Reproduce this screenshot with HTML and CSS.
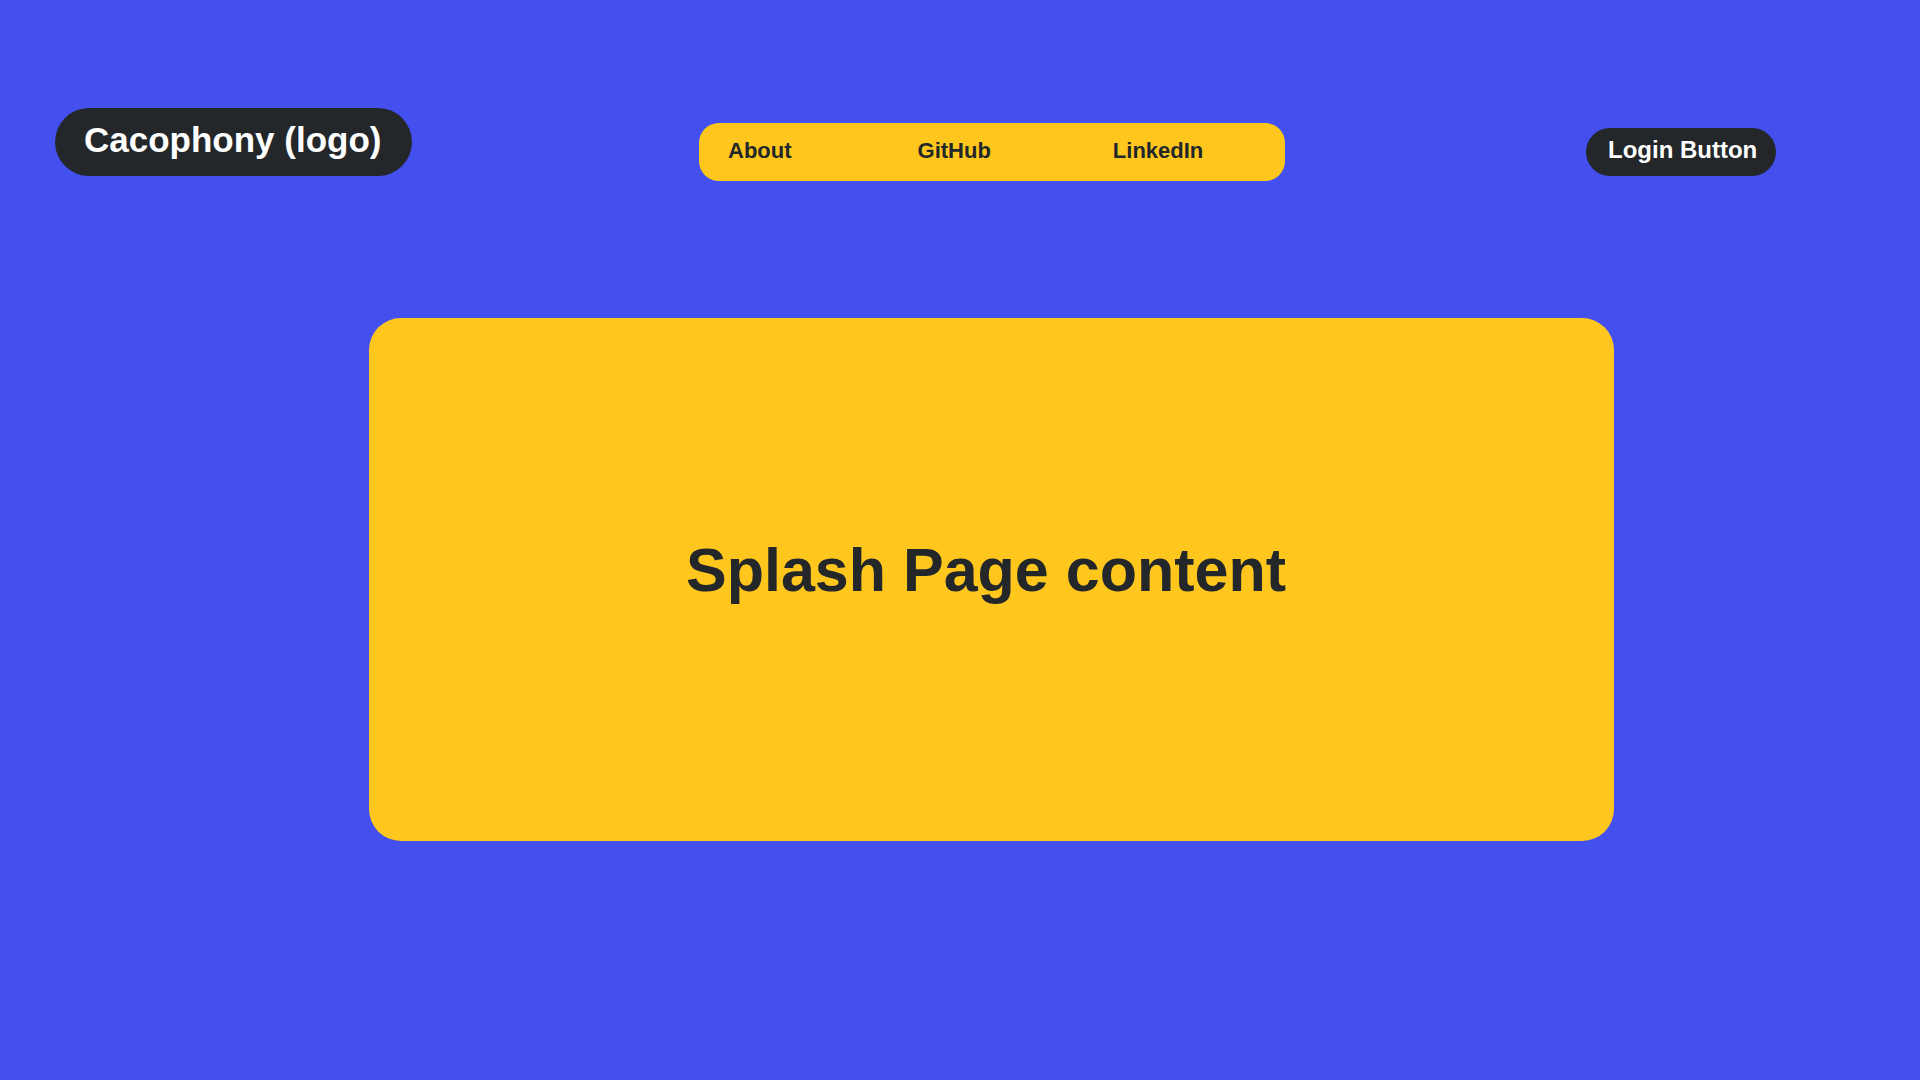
FILE: index.html
```html
<!DOCTYPE html>
<html lang="en">
<head>
<meta charset="utf-8">
<title>Cacophony</title>
<link rel="stylesheet" href="styles.css">
</head>
<body>
  <header class="header">
    <div class="logo">Cacophony (logo)</div>
    <nav class="nav">
      <a class="nav-link about" href="#">About</a>
      <a class="nav-link github" href="#">GitHub</a>
      <a class="nav-link linkedin" href="#">LinkedIn</a>
    </nav>
    <button class="login">Login Button</button>
  </header>
  <main class="main">
    <section class="splash">
      <h1 class="splash-title">Splash Page content</h1>
    </section>
  </main>
</body>
</html>
```

FILE: styles.css
```css
* { box-sizing: border-box; }

html, body {
  margin: 0;
  padding: 0;
}

body {
  background: #4350ED;
  width: 1920px;
  height: 1080px;
  overflow: hidden;
  font-family: "Liberation Sans", Arial, Helvetica, sans-serif;
  color: #23272A;
}

.header {
  display: flex;
  align-items: flex-start;
  padding: 108px 0 0 55px;
}

.logo {
  width: 357px;
  height: 68px;
  border-radius: 34px;
  background: #23272A;
  color: #ffffff;
  font-weight: 700;
  font-size: 35px;
  line-height: 64px;
  padding: 0 0 4px 29px;
  white-space: nowrap;
}

.nav {
  display: flex;
  align-items: center;
  width: 586px;
  height: 58px;
  margin: 15px 0 0 287px;
  padding: 0 0 2px 29px;
  background: #FFC71D;
  border-radius: 20px;
}

.nav-link {
  color: #23272A;
  text-decoration: none;
  font-weight: 700;
  font-size: 22px;
  line-height: 26px;
}

.github { margin-left: 126px; }
.linkedin { margin-left: 122px; }

.login {
  width: 190px;
  height: 48px;
  margin: 20px 0 0 301px;
  padding: 0 0 4px 22px;
  border: none;
  border-radius: 24px;
  background: #23272A;
  color: #ffffff;
  font-family: "Liberation Sans", Arial, Helvetica, sans-serif;
  font-weight: 700;
  font-size: 24px;
  line-height: 44px;
  text-align: left;
  white-space: nowrap;
}

.main {
  padding: 137px 0 0 369px;
}

.splash {
  width: 1245px;
  height: 523px;
  background: #FFC71D;
  border-radius: 32px;
  display: flex;
  align-items: center;
  justify-content: center;
  padding: 0 11px 20px 0;
}

.splash-title {
  margin: 0;
  font-size: 61px;
  font-weight: 700;
  line-height: 72px;
  color: #23272A;
}
```
